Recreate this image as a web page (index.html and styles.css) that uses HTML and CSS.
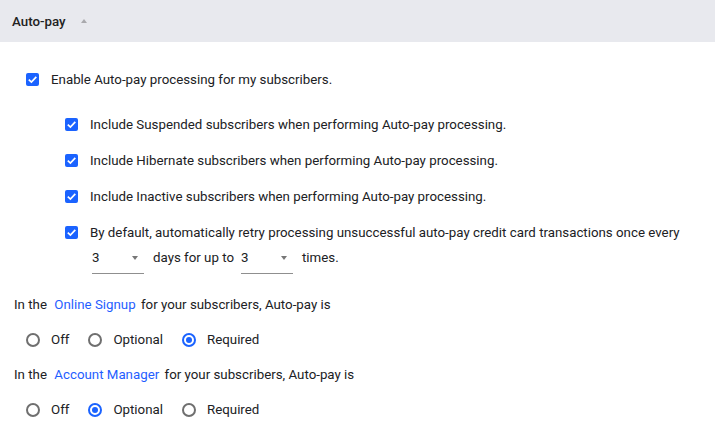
FILE: index.html
```html
<!DOCTYPE html>
<html>
<head>
<meta charset="utf-8">
<link rel="stylesheet" href="styles.css">
</head>
<body>
<div class="header">
  <span class="title">Auto-pay</span>
  <span class="caret"></span>
</div>
<div class="content">
  <div class="row main">
    <span class="cb"><svg viewBox="0 0 13 13" width="13" height="13"><path d="M2.8 6.6 L5.4 9.1 L10.3 3.9" fill="none" stroke="#fff" stroke-width="1.7"/></svg></span>
    <span class="label">Enable Auto-pay processing for my subscribers.</span>
  </div>
  <div class="sub">
    <div class="row">
      <span class="cb"><svg viewBox="0 0 13 13" width="13" height="13"><path d="M2.8 6.6 L5.4 9.1 L10.3 3.9" fill="none" stroke="#fff" stroke-width="1.7"/></svg></span>
      <span class="label">Include Suspended subscribers when performing Auto-pay processing.</span>
    </div>
    <div class="row">
      <span class="cb"><svg viewBox="0 0 13 13" width="13" height="13"><path d="M2.8 6.6 L5.4 9.1 L10.3 3.9" fill="none" stroke="#fff" stroke-width="1.7"/></svg></span>
      <span class="label">Include Hibernate subscribers when performing Auto-pay processing.</span>
    </div>
    <div class="row">
      <span class="cb"><svg viewBox="0 0 13 13" width="13" height="13"><path d="M2.8 6.6 L5.4 9.1 L10.3 3.9" fill="none" stroke="#fff" stroke-width="1.7"/></svg></span>
      <span class="label">Include Inactive subscribers when performing Auto-pay processing.</span>
    </div>
    <div class="row">
      <span class="cb"><svg viewBox="0 0 13 13" width="13" height="13"><path d="M2.8 6.6 L5.4 9.1 L10.3 3.9" fill="none" stroke="#fff" stroke-width="1.7"/></svg></span>
      <span class="label">By default, automatically retry processing unsuccessful auto-pay credit card transactions once every</span>
    </div>
    <div class="selrow">
      <div class="select"><span>3</span><span class="arrow"></span></div>
      <span class="label">days for up to</span>
      <div class="select"><span>3</span><span class="arrow"></span></div>
      <span class="label">times.</span>
    </div>
  </div>
  <div class="line">In the <a class="link">Online Signup</a> for your subscribers, Auto-pay is</div>
  <div class="radios">
    <span class="radio"></span><span class="rlabel">Off</span>
    <span class="radio"></span><span class="rlabel">Optional</span>
    <span class="radio on"></span><span class="rlabel">Required</span>
  </div>
  <div class="line">In the <a class="link">Account Manager</a> for your subscribers, Auto-pay is</div>
  <div class="radios">
    <span class="radio"></span><span class="rlabel">Off</span>
    <span class="radio on"></span><span class="rlabel">Optional</span>
    <span class="radio"></span><span class="rlabel">Required</span>
  </div>
</div>
</body>
</html>
```
FILE: styles.css
```css
html, body {
  margin: 0;
  padding: 0;
  background: #fff;
}
body {
  font-family: Roboto, "Liberation Sans", sans-serif;
  font-size: 13.3px;
  color: #202124;
}
.header {
  height: 42px;
  background: #e8e9ee;
  display: flex;
  align-items: center;
  padding-left: 12px;
}
.title {
  font-weight: 500;
  color: #222;
}
.caret {
  width: 0;
  height: 0;
  border-left: 3.5px solid transparent;
  border-right: 3.5px solid transparent;
  border-bottom: 4px solid #a9a9ad;
  margin-left: 15px;
  margin-top: -1px;
}
.content {
  padding-top: 19px;
}
.row {
  display: flex;
  align-items: center;
  height: 36px;
}
.main {
  padding-left: 26px;
  margin-bottom: 9px;
}
.sub {
  padding-left: 65px;
}
.cb {
  width: 13px;
  height: 13px;
  border-radius: 2px;
  background: #1b63ff;
  display: inline-flex;
  margin-right: 12px;
  flex: none;
}
.cb svg { display: block; }
.selrow {
  display: flex;
  align-items: flex-start;
  height: 24px;
  padding-left: 27px;
}
.select {
  width: 52px;
  height: 23px;
  border-bottom: 1px solid #8f8f8f;
  display: flex;
  justify-content: space-between;
  line-height: 16px;
  margin-right: 9px;
}
.select .arrow {
  width: 0;
  height: 0;
  border-left: 3.5px solid transparent;
  border-right: 3.5px solid transparent;
  border-top: 4px solid #777;
  margin-top: 6px;
  margin-right: 6px;
}
.selrow .label {
  line-height: 16px;
  margin-right: 7px;
}
.line {
  padding-left: 14px;
  height: 35px;
  display: flex;
  align-items: center;
  margin-top: 13px;
  white-space: pre;
}
.line + .radios + .line { margin-top: 0; }
.link {
  color: #1f5eff;
  margin: 0 2px 0 4px;
}
.radios {
  display: flex;
  align-items: center;
  height: 35px;
  padding-left: 26px;
}
.radio {
  width: 10px;
  height: 10px;
  border: 2px solid #6f6f6f;
  border-radius: 50%;
  margin-right: 11px;
  position: relative;
  flex: none;
}
.radio.on {
  border-color: #1b63ff;
}
.radio.on::after {
  content: "";
  position: absolute;
  left: 2px;
  top: 2px;
  width: 6px;
  height: 6px;
  border-radius: 50%;
  background: #1b63ff;
}
.rlabel {
  margin-right: 19px;
}
```
